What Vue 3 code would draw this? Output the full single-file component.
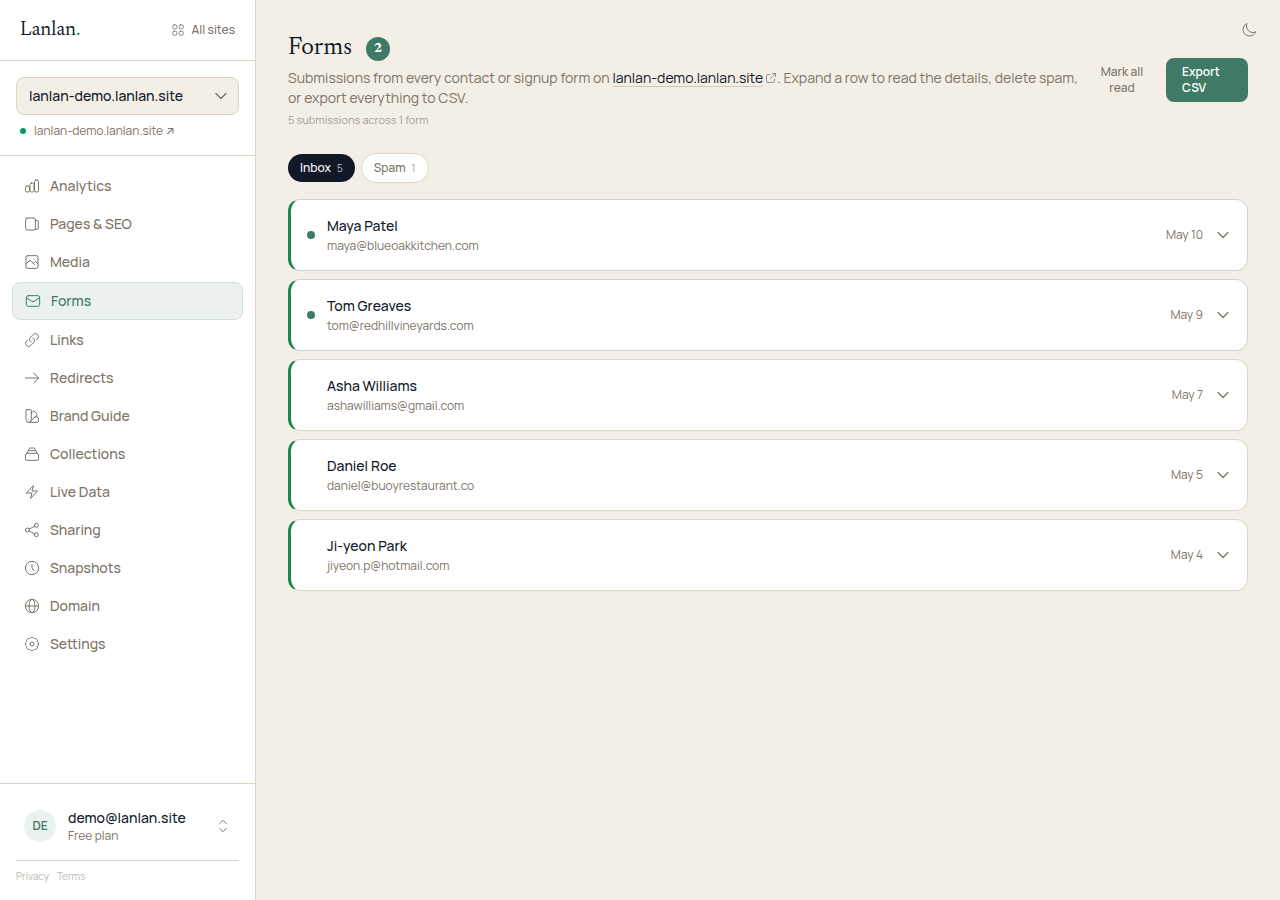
<script setup>
import { ref } from 'vue'

const site = ref('lanlan-demo.lanlan.site')
const tab = ref('inbox')

const nav = [
  { label: 'Analytics', icon: ['M4.5 12H6a2.250 2.250 0 0 1 2.250 2.250v4.500A2.250 2.250 0 0 1 6 21H4.500a2.250 2.250 0 0 1-2.250-2.250v-4.500A2.250 2.250 0 0 1 4.500 12z', 'M11.250 7.500h1.500A2.250 2.250 0 0 1 15 9.750v9A2.250 2.250 0 0 1 12.750 21h-1.500A2.250 2.250 0 0 1 9 18.750v-9a2.250 2.250 0 0 1 2.250-2.250z', 'M18 3h1.500a2.250 2.250 0 0 1 2.250 2.250v13.500A2.250 2.250 0 0 1 19.500 21H18a2.250 2.250 0 0 1-2.250-2.250V5.250A2.250 2.250 0 0 1 18 3z'] },
  { label: 'Pages & SEO', icon: ['M4.500 3h10.500a2 2 0 0 1 2 2v14a2 2 0 0 1-2 2H4.500a2 2 0 0 1-2-2V5a2 2 0 0 1 2-2z', 'M17 6.500h2.500c1.200 0 2 .8 2 2V18a2 2 0 0 1-2 2h-3'] },
  { label: 'Media', icon: ['M5 2.500h14a2 2 0 0 1 2 2v15a2 2 0 0 1-2 2H5a2 2 0 0 1-2-2v-15a2 2 0 0 1 2-2z', 'm3 15 4.500-4.500a2 2 0 0 1 3 0L16 16m-2-2 1.500-1.500a2 2 0 0 1 3 0L21 15', 'M15 7.500h.01'] },
  { label: 'Forms', icon: ['M5 4h14a3 3 0 0 1 3 3v10a3 3 0 0 1-3 3H5a3 3 0 0 1-3-3V7a3 3 0 0 1 3-3z', 'm2.500 7.500 7.800 5a3.200 3.200 0 0 0 3.400 0l7.800-5'] },
  { label: 'Links', icon: ['M13.190 8.688a4.500 4.500 0 0 1 1.242 7.244l-4.500 4.500a4.500 4.500 0 0 1-6.364-6.364l1.757-1.757m5.486 3.001a4.500 4.500 0 0 1-1.242-7.244l4.500-4.500a4.500 4.500 0 0 1 6.364 6.364l-1.757 1.757'] },
  { label: 'Redirects', icon: ['M2 12h20m-7.500-7.500L22 12l-7.500 7.500'] },
  { label: 'Brand Guide', icon: ['M4.100 2.500h5.800c.6 0 1.100.5 1.100 1.100v13.900a4 4 0 0 1-8 0V3.600c0-.6.5-1.100 1.100-1.100z', 'M11 7.500l2.700-2.700a1.100 1.100 0 0 1 1.600 0l4.100 4.100c.4.400.4 1.100 0 1.600L9.500 20.300', 'M7 21.500h13.400c.6 0 1.100-.5 1.100-1.100v-5.800c0-.6-.5-1.100-1.100-1.100h-4.100', 'M7 17.500h.01'] },
  { label: 'Collections', icon: ['M4.500 11h15a2.250 2.250 0 0 1 2.250 2.250v6a2.250 2.250 0 0 1-2.250 2.250h-15a2.250 2.250 0 0 1-2.250-2.250v-6A2.250 2.250 0 0 1 4.500 11z', 'M4.500 11 5 8.500A2 2 0 0 1 7 7h10a2 2 0 0 1 2 1.500l.5 2.500', 'M7 7l.5-2.500A2 2 0 0 1 9.500 3h5a2 2 0 0 1 2 1.500L17 7'] },
  { label: 'Live Data', icon: ['m3.750 13.500 10.500-11.250L12 10.500h8.250L9.750 21.750 12 13.500H3.750z'] },
  { label: 'Sharing', icon: ['M2 12a3 3 0 1 0 6 0 3 3 0 1 0-6 0', 'M15.500 5a3 3 0 1 0 6 0 3 3 0 1 0-6 0', 'M15.500 19a3 3 0 1 0 6 0 3 3 0 1 0-6 0', 'm7.700 10.700 8.100-4.300m-8.100 6.900 8.100 4.300'] },
  { label: 'Snapshots', icon: ['M2 12a10 10 0 1 0 20 0 10 10 0 1 0-20 0', 'M12 7v5l3 4'] },
  { label: 'Domain', icon: ['M2 12a10 10 0 1 0 20 0 10 10 0 1 0-20 0', 'M7.500 12a4.500 10 0 1 0 9 0 4.500 10 0 1 0-9 0', 'M2 12h20'] },
  { label: 'Settings', icon: ['M20.130 15.370a3.900 3.900 0 0 1-4.760 4.760 3.900 3.900 0 0 1-6.740 0 3.900 3.900 0 0 1-4.760-4.760 3.900 3.900 0 0 1 0-6.740 3.900 3.900 0 0 1 4.760-4.760 3.900 3.900 0 0 1 6.740 0 3.900 3.900 0 0 1 4.760 4.760 3.900 3.900 0 0 1 0 6.740z', 'M9 12a3 3 0 1 0 6 0 3 3 0 1 0-6 0'] },
]

const submissions = [
  { name: 'Maya Patel', email: 'maya@blueoakkitchen.com', date: 'May 10', unread: true },
  { name: 'Tom Greaves', email: 'tom@redhillvineyards.com', date: 'May 9', unread: true },
  { name: 'Asha Williams', email: 'ashawilliams@gmail.com', date: 'May 7', unread: false },
  { name: 'Daniel Roe', email: 'daniel@buoyrestaurant.co', date: 'May 5', unread: false },
  { name: 'Ji-yeon Park', email: 'jiyeon.p@hotmail.com', date: 'May 4', unread: false },
]
</script>

<template>
  <div class="layout">
    <aside class="sidebar">
      <div class="brand-bar">
        <a href="#" class="logo">Lanlan<span>.</span></a>
        <a href="#" class="all-sites">
          <svg class="icon-sm" viewBox="0 0 24 24">
            <rect x="3" y="3" width="7" height="7" rx="2.5" />
            <rect x="14" y="3" width="7" height="7" rx="2.5" />
            <rect x="3" y="14" width="7" height="7" rx="2.5" />
            <rect x="14" y="14" width="7" height="7" rx="2.5" />
          </svg>
          All sites
        </a>
      </div>

      <div class="site-picker">
        <div class="select-wrap">
          <select v-model="site" aria-label="Site">
            <option>lanlan-demo.lanlan.site</option>
          </select>
          <svg class="icon chevron" viewBox="0 0 24 24"><path d="m4.500 8.250 7.500 7.500 7.500-7.500" /></svg>
        </div>
        <a href="#" class="site-link"><span class="live-dot"></span>lanlan-demo.lanlan.site ↗</a>
      </div>

      <nav class="nav">
        <a
          v-for="item in nav"
          :key="item.label"
          href="#"
          class="nav-item"
          :class="{ active: item.label === 'Forms' }"
        >
          <svg class="icon" viewBox="0 0 24 24">
            <path v-for="d in item.icon" :key="d" :d="d" />
          </svg>
          {{ item.label }}
        </a>
      </nav>

      <div class="account">
        <button type="button" class="user">
          <span class="avatar">DE</span>
          <span class="user-text">
            <span class="user-email">demo@lanlan.site</span>
            <span class="user-plan">Free plan</span>
          </span>
          <svg class="icon" viewBox="0 0 24 24"><path d="m7 8.500 5-5 5 5m0 7-5 5-5-5" /></svg>
        </button>
        <div class="legal">
          <a href="#">Privacy</a>
          <a href="#">Terms</a>
        </div>
      </div>
    </aside>

    <main class="main">
      <button type="button" class="theme-toggle" aria-label="Toggle theme">
        <svg class="icon" viewBox="0 0 24 24">
          <path d="M21.750 15A9.750 9.750 0 0 1 18 15.750 9.750 9.750 0 0 1 8.250 6c0-1.330.270-2.600.750-3.750A9.750 9.750 0 0 0 3 11.250 9.750 9.750 0 0 0 12.750 21 9.750 9.750 0 0 0 21.750 15z" />
        </svg>
      </button>

      <header class="page-header">
        <div class="intro">
          <h1>Forms <span class="badge">2</span></h1>
          <p class="lead">
            Submissions from every contact or signup form on
            <a href="#"><span>lanlan-demo.lanlan.site</span><svg class="icon-xs" viewBox="0 0 24 24"><path d="M10 5H6a3 3 0 0 0-3 3v10a3 3 0 0 0 3 3h10a3 3 0 0 0 3-3v-4M15 3h6v6M21 3 10 14" /></svg></a>.
            Expand a row to read the details, delete spam, or export everything to CSV.
          </p>
          <p class="count">5 submissions across 1 form</p>
        </div>
        <button type="button" class="mark-read">Mark all read</button>
        <a href="#" class="export">Export CSV</a>
      </header>

      <div class="tabs">
        <button type="button" class="tab" :class="{ on: tab === 'inbox' }" @click="tab = 'inbox'">
          Inbox <span>5</span>
        </button>
        <button type="button" class="tab" :class="{ on: tab === 'spam' }" @click="tab = 'spam'">
          Spam <span>1</span>
        </button>
      </div>

      <div class="list">
        <button
          v-for="row in submissions"
          :key="row.email"
          type="button"
          class="card"
          :class="{ unread: row.unread }"
        >
          <span class="dot"></span>
          <span class="who">
            <span class="name">{{ row.name }}</span>
            <span class="email">{{ row.email }}</span>
          </span>
          <span class="date">{{ row.date }}</span>
          <svg class="icon chevron" viewBox="0 0 24 24"><path d="m4.500 8.250 7.500 7.500 7.500-7.500" /></svg>
        </button>
      </div>
    </main>
  </div>
</template>

<style>
body {
  margin: 0;
  background: #f3eee6;
}
</style>

<style scoped>
.layout {
  display: grid;
  grid-template-columns: 256px minmax(0, 1fr);
  min-height: 100vh;
  font-family: Manrope, Inter, 'Liberation Sans', sans-serif;
  font-size: 14px;
  line-height: 20px;
  color: #111827;
}

*,
*::before {
  box-sizing: border-box;
}

a {
  color: inherit;
  text-decoration: none;
}

button,
select {
  font: inherit;
  color: inherit;
  border: 0;
  background: none;
  cursor: pointer;
}

svg {
  flex: none;
  fill: none;
  stroke: currentColor;
  stroke-width: 1.5;
  stroke-linecap: round;
  stroke-linejoin: round;
}

.icon {
  width: 16px;
  height: 16px;
}

.icon-sm {
  width: 14px;
  height: 14px;
}

.icon-xs {
  width: 12px;
  height: 12px;
}

.chevron {
  color: #7c7468;
  stroke-width: 2;
}

.sidebar {
  display: flex;
  flex-direction: column;
  background: #fff;
  border-right: 1px solid #ddd6c8;
}

.brand-bar {
  display: flex;
  align-items: center;
  justify-content: space-between;
  height: 61px;
  padding: 0 20px;
  border-bottom: 1px solid #ddd6c8;
}

.logo {
  font-family: Newsreader, 'Liberation Serif', serif;
  font-size: 20px;
  line-height: 28px;
}

.logo span {
  color: #3f7a66;
}

.all-sites {
  display: flex;
  align-items: center;
  gap: 6px;
  font-size: 12px;
  font-weight: 500;
  color: #7c7468;
}

.site-picker {
  padding: 16px;
  border-bottom: 1px solid #ddd6c8;
}

.select-wrap {
  display: grid;
  align-items: center;
}

.select-wrap > * {
  grid-area: 1 / 1;
}

.select-wrap .chevron {
  justify-self: end;
  margin-right: 10px;
  pointer-events: none;
}

select {
  appearance: none;
  width: 100%;
  height: 38px;
  padding: 0 32px 0 12px;
  border: 1px solid #ddd6c8;
  border-radius: 8px;
  background: #f3eee6;
  font-weight: 500;
}

.site-link {
  display: flex;
  align-items: center;
  gap: 8px;
  margin-top: 8px;
  padding-left: 4px;
  font-size: 12px;
  line-height: 16px;
  color: #7c7468;
}

.live-dot {
  width: 6px;
  height: 6px;
  border-radius: 50%;
  background: #059669;
}

.nav {
  display: flex;
  flex: 1;
  flex-direction: column;
  gap: 2px;
  padding: 12px;
}

.nav-item {
  display: flex;
  align-items: center;
  gap: 10px;
  padding: 8px 12px;
  border-radius: 8px;
  font-weight: 500;
  color: #7c7468;
}

.nav-item.active {
  border: 1px solid #d3e0db;
  background: #ebf1ef;
  color: #3f7a66;
}

.account {
  padding: 16px;
  border-top: 1px solid #ddd6c8;
}

.user {
  display: flex;
  align-items: center;
  gap: 12px;
  width: 100%;
  padding: 8px;
  text-align: left;
}

.user svg {
  color: #7c7468;
}

.avatar {
  display: grid;
  place-items: center;
  width: 32px;
  height: 32px;
  border-radius: 50%;
  background: #ebf1ef;
  font-size: 12px;
  font-weight: 600;
  color: #3f7a66;
}

.user-text {
  display: flex;
  flex: 1;
  flex-direction: column;
}

.user-email {
  font-weight: 500;
}

.user-plan {
  font-size: 12px;
  line-height: 16px;
  color: #7c7468;
}

.legal {
  display: flex;
  gap: 8px;
  margin-top: 8px;
  padding-top: 8px;
  border-top: 1px solid #ddd6c8;
  font-size: 10px;
  line-height: 15px;
  color: #bdb9b3;
}

.main {
  position: relative;
  padding: 32px;
}

.theme-toggle {
  position: absolute;
  top: 14px;
  right: 15px;
  display: grid;
  place-items: center;
  width: 32px;
  height: 32px;
  padding: 0;
  color: #7c7468;
}

.page-header {
  display: flex;
  align-items: center;
  gap: 8px;
}

.intro {
  flex: 1;
}

h1 {
  display: flex;
  align-items: center;
  gap: 14px;
  margin: 0 0 2px;
  font-family: Newsreader, 'Liberation Serif', serif;
  font-size: 25px;
  font-weight: 400;
  line-height: 34px;
}

.badge {
  display: grid;
  place-items: center;
  width: 24px;
  height: 24px;
  border-radius: 50%;
  background: #3f7a66;
  font-size: 14px;
  font-weight: 700;
  line-height: 24px;
  color: #fff;
}

p {
  margin: 0;
}

.lead {
  color: #7c7468;
}

.lead a span {
  color: #111827;
  text-decoration: underline 1px #d0c9bd;
  text-underline-offset: 3px;
}

.lead svg {
  margin-left: 2px;
  vertical-align: -1px;
}

.count {
  margin-top: 4px;
  font-size: 11px;
  line-height: 16px;
  color: #a59e94;
}

.mark-read {
  width: 72px;
  padding: 6px 12px;
  font-size: 12px;
  font-weight: 500;
  line-height: 16px;
  color: #7c7468;
}

.export {
  width: 82px;
  padding: 6px 16px;
  border-radius: 8px;
  background: #3f7a66;
  font-size: 12px;
  font-weight: 600;
  line-height: 16px;
  color: #fff;
}

.tabs {
  display: flex;
  align-items: center;
  gap: 6px;
  margin: 25px 0 16px;
}

.tab {
  display: flex;
  align-items: center;
  gap: 6px;
  padding: 6px 12px;
  border: 1px solid #ddd6c8;
  border-radius: 16px;
  background: #fff;
  font-size: 12px;
  font-weight: 500;
  line-height: 16px;
  color: #7c7468;
}

.tab span {
  font-size: 10px;
  font-weight: 400;
  opacity: 0.7;
}

.tab.on {
  border: 0;
  background: #111827;
  color: #fff;
}

.list {
  display: grid;
  gap: 8px;
}

.card {
  display: flex;
  align-items: center;
  gap: 12px;
  padding: 16px;
  border: 1px solid #ddd6c8;
  border-left: 3px solid #22854f;
  border-radius: 12px;
  background: #fff;
  text-align: left;
}

.card.unread {
  border-color: #c5d7d1;
  border-left-color: #22854f;
}

.dot {
  width: 8px;
  height: 8px;
  border-radius: 50%;
}

.unread .dot {
  background: #3f7a66;
}

.who {
  display: flex;
  flex: 1;
  flex-direction: column;
  gap: 2px;
}

.name {
  font-weight: 500;
}

.email,
.date {
  font-size: 12px;
  line-height: 16px;
  color: #7c7468;
}
</style>
